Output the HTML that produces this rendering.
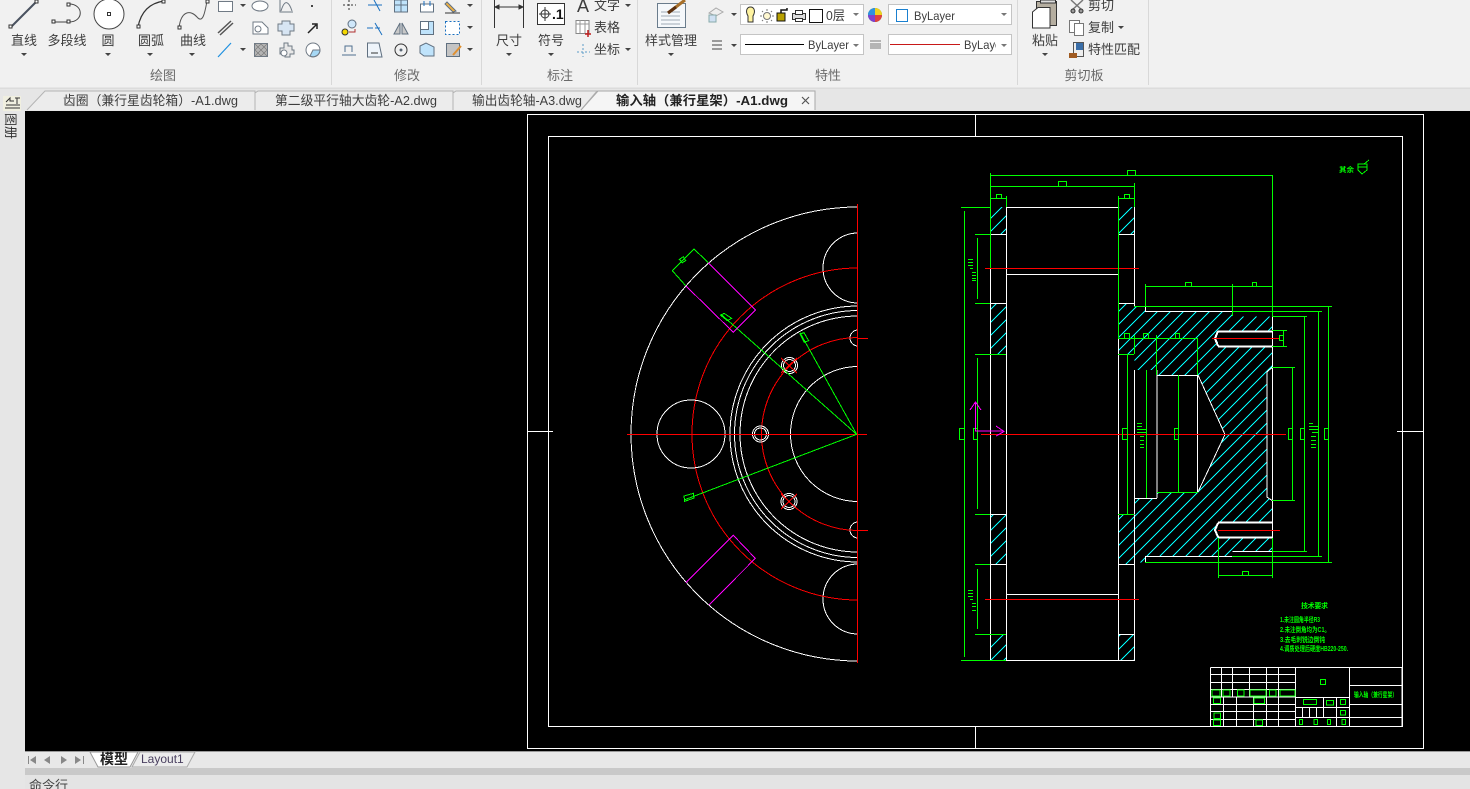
<!DOCTYPE html>
<html><head><meta charset="utf-8"><title>CAD</title>
<style>
html,body{margin:0;padding:0;background:#000;overflow:hidden;width:1470px;height:789px}
svg{display:block}
text{font-family:"Liberation Sans","Noto Sans CJK SC",sans-serif;fill:#3d3d3d;font-size:13px}
.c{text-anchor:middle}
.g{fill:#6a6a6a}
.cad{shape-rendering:crispEdges}
.cad text{fill:#00ff00;font-size:7px;font-weight:700}
</style></head><body>
<svg width="1470" height="789" viewBox="0 0 1470 789" xmlns="http://www.w3.org/2000/svg">
<defs>
<pattern id="h" patternUnits="userSpaceOnUse" width="13" height="13" shape-rendering="crispEdges"><path d="M-1,14L14,-1M-8,8L8,-8M5,21L21,5" stroke="#00ffff" stroke-width="1" shape-rendering="crispEdges"/></pattern>
<clipPath id="lc"><rect x="600" y="190" width="258" height="480"/></clipPath>
<clipPath id="bl"><rect x="963" y="30" width="33" height="30"/></clipPath>
</defs>

<!-- chrome -->
<rect width="1470" height="89" fill="#f1f1f1"/>
<rect y="87" width="1470" height="24" fill="#e6e6e6"/>
<rect y="88" width="1470" height="1" fill="#dcdcdc"/>
<rect y="111" width="25" height="678" fill="#e6e6e6"/>
<rect x="25" y="111" width="1445" height="640" fill="#000"/>
<rect x="25" y="751" width="1445" height="17" fill="#e8e8e8"/>
<rect x="25" y="751" width="1445" height="1" fill="#9a9a9a"/>
<rect x="25" y="768" width="1445" height="7" fill="#c9c9c9"/>
<rect x="25" y="775" width="1445" height="14" fill="#e4e4e4"/>
<g fill="#d8d8d8"><rect x="331" y="0" width="1" height="85"/><rect x="481" y="0" width="1" height="85"/><rect x="637" y="0" width="1" height="85"/><rect x="1017" y="0" width="1" height="85"/><rect x="1148" y="0" width="1" height="85"/></g>

<!-- draw large icons -->
<g fill="none">
<path d="M11,27L37,1" stroke="#4a5260" stroke-width="2"/>
<path d="M53,22H69M69,4C84,4 84,22 69,22" stroke="#444" stroke-width="1"/>
<circle cx="109" cy="14" r="15" fill="#fff" stroke="#444"/>
<path d="M138,27C141,11 150,3 164,1" stroke="#333" stroke-width="1.2"/>
<path d="M179,28C181,10 191,10 197,17C203,24 205,12 207,1" stroke="#555" stroke-width="1"/>
<g stroke="#333" fill="#fff"><rect x="9" y="25" width="3" height="3"/><rect x="35" y="0" width="3" height="3"/><rect x="52" y="20" width="3" height="3"/><rect x="67" y="20" width="3" height="3"/><rect x="67" y="3" width="3" height="3"/><rect x="107.500" y="12.500" width="3" height="3"/><rect x="137" y="25" width="3" height="3"/><rect x="162" y="0" width="3" height="3"/><rect x="178" y="26" width="3" height="3"/><rect x="206" y="0" width="3" height="3"/></g>
</g>
<text x="24" y="45" class="c">直线</text><text x="67" y="45" class="c">多段线</text><text x="108" y="45" class="c">圆</text><text x="151" y="45" class="c">圆弧</text><text x="193" y="45" class="c">曲线</text>
<g fill="#444"><path d="M21,53h6l-3,3zM105,53h6l-3,3zM147,53h6l-3,3zM189,53h6l-3,3zM240,4h6l-3,3zM240,48h6l-3,3zM467,4h6l-3,3zM467,26h6l-3,3zM467,48h6l-3,3zM506,53h6l-3,3zM548,53h6l-3,3zM625,4h6l-3,3zM625,48h6l-3,3zM668,53h6l-3,3zM731,13h6l-3,3zM731,44h6l-3,3zM1042,53h6l-3,3zM1118,26h6l-3,3z"/></g>

<!-- draw small icons -->
<g fill="none" stroke="#707a85">
<rect x="218.500" y="1.500" width="14" height="10" fill="#fff"/>
<ellipse cx="260" cy="6" rx="8" ry="5" fill="#fff"/>
<path d="M280,0V12H293M281,11C285,-2 289,2 292,11"/>
<path d="M218,33L231,21M220,35L233,23" stroke="#555" stroke-width="1.500"/>
<path d="M253,22H262L268,28V34H253Z" fill="#fff"/><circle cx="258" cy="29" r="3"/>
<path d="M278,24H282V21H290V24H294V31H290V35H282V31H278Z" fill="#d7e5f3"/>
<path d="M218,57L231,43" stroke="#1e90e0" stroke-width="1.200"/>
<rect x="254.500" y="43.500" width="13" height="13" fill="#b4b4b4"/><path d="M255,50L261,44M255,56L267,44M261,56L267,50M255,50L261,56M255,44L267,56M261,44L267,50" stroke="#777" stroke-width=".6"/>
<path d="M284,43H288V46H292V50H294V54H290V57H285V54H280V48H284Z" fill="#e8e8e8"/><circle cx="284" cy="53" r="3" fill="#fff"/>
<circle cx="313" cy="50" r="7" fill="#fff"/><path d="M313,50H320A7,7 0 0 1 310,56Z" fill="#a6d8f5"/>
</g>
<rect x="311" y="5" width="2" height="2" fill="#444"/>
<path d="M308,33L316,25M312,24H317V29" stroke="#222" stroke-width="1.500" fill="none"/>

<!-- modify icons -->
<g fill="none" stroke="#607080">
<path d="M349,0V11M343,5H356" stroke-dasharray="2 2" stroke="#333"/>
<path d="M368,5H382M374,0L380,11" stroke="#1a70c0"/>
<rect x="394.500" y="0" width="13" height="12" fill="#bfe3fb"/><path d="M401,0V12M394,5H408"/>
<path d="M420.500,4H433.500V12H420.500Z" fill="#fff"/><path d="M424,1V6M430,1V6" stroke="#1a70c0"/>
<path d="M447,2L456,11L453,12L445,4Z" fill="#f0b040"/><path d="M445,13H460" stroke="#333"/>
<circle cx="352" cy="24" r="4" fill="#cfe7fa"/><circle cx="345" cy="32" r="3" fill="#f5d800" stroke="#333"/><path d="M349,32H355V29" stroke="#b03030"/>
<path d="M367,28H373M375,28H380M375,23L382,35" stroke="#1a70c0"/>
<path d="M400,23L394,34H400ZM402,23L408,34H402Z" fill="#c8c8c8"/>
<rect x="420.500" y="21.500" width="13" height="13" fill="#bfe3fb"/><rect x="420.500" y="21.500" width="8" height="8" fill="#fff"/>
<rect x="445.500" y="21.500" width="14" height="13" fill="#fff" stroke-dasharray="2 2" stroke="#1a70c0"/>
<path d="M342,55H356M345,52V46H352V52" stroke="#507090"/>
<path d="M367.500,43H379L382,57H367.500Z" fill="#eef4fa"/><path d="M371,53H378" stroke="#333"/>
<circle cx="401" cy="50" r="6" stroke="#333"/><circle cx="401" cy="50" r="1" fill="#333"/>
<path d="M420,46L426,43L434,47V56H424L420,53Z" fill="#bfe3fb"/>
<rect x="446.500" y="43.500" width="13" height="13" fill="#c4c4c4"/><path d="M453,55L461,46" stroke="#e09030" stroke-width="2"/>
</g>
<text x="163" y="80" class="c g">绘图</text><text x="407" y="80" class="c g">修改</text><text x="560" y="80" class="c g">标注</text><text x="828" y="80" class="c g">特性</text><text x="1084" y="80" class="c g">剪切板</text>

<!-- annotate -->
<g fill="none" stroke="#333">
<path d="M494.500,0V28M523.500,0V28M495,7H523"/><path d="M495,7l4,-2v4zM523,7l-4,-2v4z" fill="#333"/>
<rect x="537.500" y="3.500" width="27" height="21" fill="#fff"/><circle cx="545" cy="14" r="4"/><path d="M545,7V21M539,14H551"/>
<rect x="576" y="20.500" width="13" height="13" fill="#fff" stroke="#888"/><path d="M576,24H589M580,20V33M585,20V33" stroke="#999"/><path d="M588,30V37M585,34H591" stroke="#c02020" stroke-width="1.500"/>
<path d="M577,52H590M583,44V57" stroke="#5a9ac8" stroke-dasharray="2 2"/>
</g>
<text x="552" y="19" style="font-size:14px;font-weight:700;fill:#111">.1</text>
<text x="577" y="12" style="font-size:18px">A</text>
<text x="509" y="45" class="c">尺寸</text><text x="551" y="45" class="c">符号</text>
<text x="594" y="10">文字</text><text x="594" y="32">表格</text><text x="594" y="54">坐标</text>

<!-- style -->
<g fill="none">
<rect x="657.500" y="3.500" width="28" height="24" fill="#f5f8fb" stroke="#6a7c8c"/>
<path d="M661,12H680M661,16H680M661,20H680M661,24H680" stroke="#a0aab5"/>
<path d="M668,13L685,0" stroke="#a8702a" stroke-width="3"/><path d="M668,13L676,7" stroke="#5a3010" stroke-width="3"/>
<path d="M709,13L716,8L723,12L716,16Z" fill="#eee" stroke="#aaa"/><rect x="709" y="15" width="7" height="7" fill="#cfe0f2" stroke="#8aa"/>
<path d="M712,41H722M712,45H722M712,49H722" stroke="#444"/>
</g>
<text x="671" y="45" class="c">样式管理</text>

<!-- property boxes -->
<g fill="#fff" stroke="#c4c4c4"><rect x="740.500" y="4.500" width="123" height="20"/><rect x="888.500" y="4.500" width="123" height="20"/><rect x="740.500" y="34.500" width="123" height="20"/><rect x="888.500" y="34.500" width="123" height="20"/></g>
<g fill="none" stroke="#333">
<path d="M748,16C745,11 747,7 750.500,7C754,7 756,11 753,16V22H748Z" fill="#fff3a0"/>
<circle cx="767" cy="16" r="3.500" fill="#fff8d0" stroke="#777"/><path d="M767,9V11M767,21V23M760,16H762M772,16H774M762,11L763,12M771,20L772,21M772,11L771,12M763,20L762,21" stroke="#777"/>
<path d="M781,13V10H787V8" stroke="#111" stroke-width="1.500"/><rect x="777" y="13" width="8" height="8" fill="#b8a000" stroke="#111"/>
<rect x="792.500" y="13.500" width="13" height="6" fill="#ddd"/><rect x="795.500" y="10.500" width="7" height="4" fill="#fff"/><rect x="795.500" y="18.500" width="7" height="3" fill="#fff"/>
<rect x="809.500" y="9.500" width="13" height="13" fill="#fff" stroke="#111"/>
<rect x="896.500" y="9.500" width="11" height="12" stroke="#1a80d0"/>
</g>
<text x="826" y="20" textLength="19" lengthAdjust="spacingAndGlyphs">0层</text><text x="914" y="20" style="font-size:12px" textLength="41" lengthAdjust="spacingAndGlyphs">ByLayer</text>
<g fill="#777"><path d="M853,13h6l-3,3zM1001,13h6l-3,3zM853,44h6l-3,3zM1001,44h6l-3,3z"/></g>
<circle cx="875" cy="15" r="7" fill="#2a9a3a"/><path d="M875,15V8A7,7 0 0 1 882,15Z" fill="#f0d020"/><path d="M875,15H882A7,7 0 0 1 875,22Z" fill="#e04040"/><path d="M875,15V22A7,7 0 0 1 868,15Z" fill="#8040d0"/><path d="M875,15H868A7,7 0 0 1 875,8Z" fill="#3090e0"/>
<path d="M745,44.500H804" stroke="#000"/><text x="808" y="49" style="font-size:12px" textLength="41" lengthAdjust="spacingAndGlyphs">ByLayer</text>
<path d="M870,41H881M870,44H881M870,46H881M870,48H881" stroke="#777" fill="none"/>
<path d="M890,44.500H960" stroke="#c81818"/>
<g clip-path="url(#bl)"><text x="964" y="49" style="font-size:12px" textLength="41" lengthAdjust="spacingAndGlyphs">ByLayer</text></g>

<!-- clipboard -->
<g fill="none" stroke="#333">
<rect x="1036.500" y="1.500" width="20" height="24" fill="#b5aea0"/>
<path d="M1032.500,12L1038,7.500H1050V28H1032.500Z" fill="#fff"/>
<rect x="1040.500" y="0" width="15" height="3" fill="#ddd"/>
<path d="M1071,0L1083,11M1083,0L1071,11" stroke="#777" stroke-width="1.500"/><circle cx="1073" cy="11" r="2" fill="#999"/><circle cx="1081" cy="11" r="2" fill="#999"/>
<rect x="1069.500" y="20.500" width="10" height="12" fill="#fff" stroke="#777"/><rect x="1074.500" y="23.500" width="9" height="12" fill="#fff" stroke="#777"/>
<rect x="1073.500" y="42.500" width="10" height="14" fill="#eee" stroke="#555"/><rect x="1076" y="43" width="7" height="7" fill="#3a6ea8" stroke="none"/>
<path d="M1069,53H1077V58H1069Z" fill="#a05a20" stroke="none"/>
</g>
<text x="1045" y="45" class="c">粘贴</text>
<text x="1088" y="10">剪切</text><text x="1088" y="32">复制</text><text x="1088" y="54">特性匹配</text>

<!-- doc tabs -->
<path d="M27,110L45,91H255V110M255,110V93L258,91H453V110M453,110V93L456,91H597L581,110" fill="#ececec" stroke="#b4b4b4"/>
<path d="M581,110L598,91H815V110" fill="#f5f5f5" stroke="#a8a8a8"/>
<text x="63" y="105" textLength="175" lengthAdjust="spacingAndGlyphs">齿圈（兼行星齿轮箱）-A1.dwg</text>
<text x="275" y="105" textLength="162" lengthAdjust="spacingAndGlyphs">第二级平行轴大齿轮-A2.dwg</text>
<text x="472" y="105" textLength="110" lengthAdjust="spacingAndGlyphs">输出齿轮轴-A3.dwg</text>
<text x="616" y="105" style="font-weight:700;fill:#222" textLength="172" lengthAdjust="spacingAndGlyphs">输入轴（兼行星架）-A1.dwg</text>
<path d="M802,97L809,104M809,97L802,104" stroke="#555" stroke-width="1.200"/>

<!-- side panel -->
<rect x="3" y="96" width="18" height="15" fill="#f0efe0"/>
<path d="M6,102L10,98V101H14M15,98H20M17,98V104M6,105H20M5,108H20" stroke="#333" fill="none"/>
<text transform="translate(6,113) rotate(90)" style="font-size:13px;fill:#333" y="0">图册</text>

<!-- bottom tabs -->
<g fill="#888"><path d="M28,756h1v8h-1zM36,756v8l-6,-4zM50,756v8l-6,-4zM61,756l6,4l-6,4zM75,756l6,4l-6,4zM83,756h1v8h-1z"/></g>
<path d="M90,752L98,767H130L138,752Z" fill="#fff" stroke="#999"/>
<path d="M132,767L140,752H195L187,767Z" fill="#ececec" stroke="#aaa"/>
<text x="114" y="764" class="c" style="font-weight:700;font-size:14px;fill:#222">模型</text>
<text x="141" y="763" style="font-size:12px;fill:#4a4060">Layout1</text>
<text x="29" y="790" style="font-size:13px;fill:#444">命令行</text>

<!-- CAD drawing -->
<g class="cad" fill="none" stroke-width="1">
<g stroke="#fff">
<rect x="527.500" y="114.500" width="896" height="634"/>
<rect x="548.500" y="136.500" width="854" height="590"/>
<path d="M975.500,114V136M975.500,726V748M527,431.500H553M1397,431.500H1423"/>
</g>

<!-- left view -->
<g clip-path="url(#lc)">
<g stroke="#fff">
<circle cx="858" cy="434" r="227"/>
<circle cx="858" cy="434" r="128"/><circle cx="858" cy="434" r="123.500"/><circle cx="858" cy="434" r="118"/>
<circle cx="858" cy="434" r="67.500"/>
<circle cx="858" cy="268" r="35"/><circle cx="858" cy="599" r="35"/>
<circle cx="858" cy="338" r="8"/><circle cx="858" cy="530" r="8"/>
</g>
<g stroke="#f00"><circle cx="858" cy="434" r="166"/><circle cx="858" cy="434" r="96.500"/></g>
</g>
<g stroke="#fff">
<circle cx="691" cy="434" r="34"/>
<circle cx="789.500" cy="365.500" r="8"/><circle cx="789.500" cy="365.500" r="6"/>
<circle cx="760.500" cy="434" r="8"/><circle cx="760.500" cy="434" r="6"/>
<circle cx="789" cy="501.500" r="8"/><circle cx="789" cy="501.500" r="6"/>
</g>
<g stroke="#f00">
<path d="M627,434.500H867M857.500,204V663M858,338.500H868M858,530.500H868"/>
<path d="M781,358L797,373M797,358L781,373M781,494L797,509M797,494L781,509"/>
</g>
<g transform="translate(620,200) scale(.33333)" stroke-width="3">
<g stroke="#0f0">
<path d="M710,703L302,342M710,703L540,398M710,703L192,900"/>
<path d="M157,212L222,147L265,188M157,212L197,257"/>
<path d="M178,178L190,170L197,182L187,188ZM302,346L312,340L335,355L322,362ZM540,402L552,398L566,422L553,427ZM192,888L220,880L222,894L194,904Z"/>
</g>
<g stroke="#f0f"><path d="M197,257L340,397L406,330L265,188M197,1148L340,1006L406,1075L267,1215"/></g>
</g>

<!-- right view hatch -->
<g fill="url(#h)">
<rect x="990" y="207" width="16" height="27"/><rect x="990" y="303" width="16" height="51"/><rect x="990" y="514" width="16" height="50"/><rect x="990" y="634" width="16" height="26"/>
<rect x="1118" y="207" width="16" height="27"/><rect x="1118" y="634" width="16" height="26"/>
<path d="M1118.300,303H1134.300V306.700H1145.700V311.300H1232.300V316.300H1272.300V367.300L1266.700,372V497L1272.300,500.700V551.300H1232.300V556H1145.700V562.300H1134.300V564.300H1118.300V514.300H1134.300V498.300H1156.700V492.300H1197.700L1225,434.300L1197.700,375.300H1156.700V370H1134.300V354.300H1118.300Z"/>
</g>
<g fill="#000"><rect x="1218" y="331" width="54" height="16"/><rect x="1218" y="522" width="54" height="16"/></g>

<!-- right view white -->
<g stroke="#fff">
<path d="M990.500,268V660.500H1134.500V514.500M1134.500,660V564.500H1118.500V660M1006.500,207V660M1118.500,338V660"/>
<path d="M1006,207.500H1118M990,234.500H1006M1118,234.500H1134M1134.500,207V303.500M1118,303.500H1134M990,303.500H1006M990,514.500H1006M990,564.500H1006M990,634.500H1006M1118,634.500H1134M1006,274.500H1118M1006,594.500H1118"/>
<path d="M1134.500,303V306M1145.500,307V311.500H1232M1145.500,562V556.500H1232M1232.500,551.500H1272M1272.500,317V551"/>
<path d="M1134.500,370V514M1157,370V498M1157,375.500H1198M1157,492.500H1198M1198,375L1225,434.500L1198,492M1197.500,375V492M1134,498.500H1157"/>
<path d="M1272,367.500L1267,372V497L1272,500.500"/>
<path d="M1218,331.500H1272M1218,346.500H1272M1218,331L1215,338.500L1218,346M1218,522.500H1272M1218,537.500H1272M1218,523L1215,530L1218,537" stroke-width="2"/>
</g>
<g stroke="#f00">
<path d="M985,268.500H1139M985,599.500H1139M981,434.500H1286M1212,338.500H1279M1218,530.500H1280"/>
</g>

<!-- right view green -->
<g stroke="#0f0">
<path d="M990.500,173V268M990,175.500H1272M1272.500,175V316M990,186.500H1134M1134.500,183V207M990,198.500H1006M1118,198.500H1134M1006.500,196V207M1118.500,196V338"/>
<rect x="1127.500" y="170.500" width="8" height="5"/><rect x="1058.500" y="181.500" width="8" height="5"/><rect x="996.500" y="194.500" width="5" height="4"/><rect x="1124.500" y="194.500" width="5" height="4"/>
<path d="M961,207.500H990M964.500,211V657M961,660.500H1006"/>
<path d="M975,234.500H990M977.500,238V299M975,303.500H990M975,354.500H1006M977.500,358V509M975,514.500H990M975,564.500H990M977.500,569V629M975,634.500H1006"/>
<path d="M1118,354.500H1134M1118,514.500H1134M1127.500,354V514"/>
<path d="M1145.500,284V307M1145,286.500H1232M1232.500,284V316M1232,286.500H1272M1134,306.500H1332M1232,311.500H1322M1272,316.500H1307M1145,562.500H1332M1232,556.500H1322M1272,551.500H1307"/>
<path d="M1328.500,307V562M1318.500,312V556M1304.500,317V551"/>
<path d="M1118,338.500H1198M1134.500,335V354M1156.500,335V375M1197.500,338V375M1146.500,370V498M1178.500,375V492M1157,492.500H1198"/>
<path d="M1272,367.500H1295M1272,500.500H1295M1292.500,368V500M1272,330.500H1287M1272,346.500H1287M1283.500,331V346"/>
<path d="M1218.500,538V578M1272.500,538V578M1219,575.500H1272"/>
<rect x="1185.500" y="282.500" width="6" height="4"/><rect x="1252.500" y="282.500" width="4" height="4"/><rect x="1124.500" y="333.500" width="5" height="5"/><rect x="1143.500" y="333.500" width="5" height="5"/><rect x="1175.500" y="333.500" width="4" height="5"/><rect x="1279.500" y="335.500" width="4" height="5"/><rect x="1242.500" y="571.500" width="6" height="4"/>
<rect x="959.500" y="428.500" width="5" height="11"/><rect x="973.500" y="428.500" width="4" height="11"/><rect x="1122.500" y="428.500" width="5" height="11"/><rect x="1174.500" y="428.500" width="4" height="11"/><rect x="1288.500" y="428.500" width="4" height="11"/><rect x="1300.500" y="428.500" width="4" height="11"/><rect x="1324.500" y="428.500" width="4" height="11"/>
<path d="M968,259.500H973M968,262.500H973M968,265.500H973M970,268.500H973M972,272.500H976M972,275.500H976M972,278.500H976M972,280.500H976"/>
<path d="M968,590.500H973M968,593.500H973M968,596.500H973M970,599.500H973M972,603.500H976M972,606.500H976M972,610.500H976"/>
<path d="M1137,423.500H1142M1137,426.500H1142M1137,429.500H1147M1137,432.500H1147M1140,436.500H1144M1140,440.500H1144M1140,444.500H1144M1140,447.500H1144"/>
<path d="M1309,423.500H1313M1309,426.500H1318M1309,429.500H1318M1312,432.500H1318M1311,436.500H1316M1311,440.500H1316M1311,444.500H1316M1311,447.500H1316"/>
</g>

<!-- UCS -->
<path d="M975.500,402V431H1004M970,410L975.500,402L981,410M996,426L1004,431.500L996,436" stroke="#f0f"/>

<!-- roughness -->
<path d="M1358,164H1367V170L1362,174L1358,170ZM1358,167H1367M1364,164L1369,160" stroke="#0f0"/>
<text x="1339" y="172" style="font-size:7px" textLength="15" lengthAdjust="spacingAndGlyphs">其余</text>

<!-- notes -->
<text x="1301" y="608" style="font-size:7px" textLength="27" lengthAdjust="spacing">技术要求</text>
<text x="1280" y="622" textLength="40" lengthAdjust="spacingAndGlyphs">1.未注圆角半径R3</text>
<text x="1280" y="632" textLength="50" lengthAdjust="spacingAndGlyphs">2.未注倒角均为C1。</text>
<text x="1280" y="642" textLength="45" lengthAdjust="spacingAndGlyphs">3.去毛刺锐边倒钝</text>
<text x="1280" y="651" textLength="68" lengthAdjust="spacingAndGlyphs">4.调质处理后硬度HB220-250.</text>
<text x="1354" y="697" style="font-size:7px" textLength="43" lengthAdjust="spacingAndGlyphs">输入轴（兼行星架）</text>

<!-- title block -->
<g transform="translate(1200,590) scale(.33333)" stroke-width="3">
<g stroke="#fff">
<path d="M32,232H606M32,232V409M606,232V409"/>
<path d="M32,253H287M32,277H287M32,298H287M32,321H287M32,343H287M32,365H287M32,388H287"/>
<path d="M64,232V321M97,232V321M148,232V321M199,232V409M235,232V409M70,321V409M109,321V409M160,321V409"/>
<path d="M287,232V409M448,232V409M287,322H448M287,352H448M287,382H448M370,322V382M409,322V409M307,352V382M328,352V382M349,352V382"/>
<path d="M448,286H606M448,343H606M448,382H606"/>
</g>
<g stroke="#0f0">
<rect x="36" y="300" width="24" height="18"/><rect x="69" y="300" width="21" height="18"/><rect x="112" y="300" width="20" height="18"/><rect x="150" y="300" width="48" height="18"/><rect x="208" y="300" width="20" height="18"/><rect x="240" y="300" width="45" height="18"/>
<rect x="40" y="324" width="22" height="17"/><rect x="162" y="324" width="32" height="17"/><rect x="42" y="369" width="20" height="17"/><rect x="40" y="390" width="22" height="17"/><rect x="168" y="390" width="20" height="17"/>
<rect x="361" y="268" width="16" height="16"/><rect x="310" y="328" width="40" height="16"/><rect x="379" y="331" width="22" height="14"/><rect x="421" y="328" width="16" height="16"/><rect x="421" y="361" width="16" height="14"/>
<rect x="298" y="388" width="10" height="16"/><rect x="342" y="388" width="11" height="16"/><rect x="382" y="388" width="10" height="16"/><rect x="426" y="388" width="11" height="16"/>
</g>
</g>
</g>
</svg>
</body></html>
